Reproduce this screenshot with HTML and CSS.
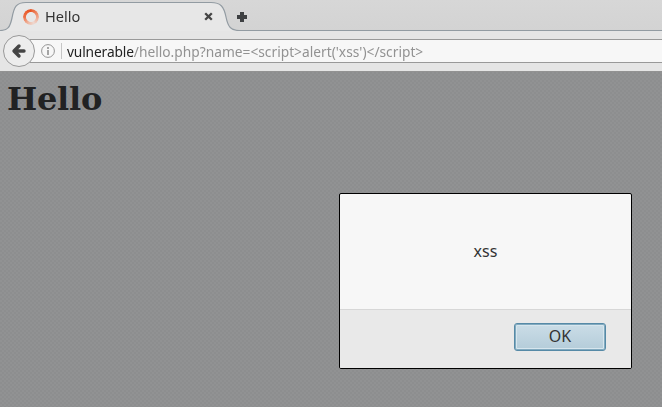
FILE: index.html
```html
<!DOCTYPE html>
<html lang="en">
<head>
<meta charset="utf-8">
<title>Hello</title>
<link rel="stylesheet" href="styles.css">
</head>
<body>
<div class="browser">
  <header class="tabs">
    <svg class="tab-shape" width="662" height="31" viewBox="0 0 662 31">
      <path d="M0 30.5C8 30.5 10 27 12 18C14 7 16 2.5 26 2.5H211C221 2.5 224 7 226 17C228 27 231 30.5 239 30.5V31H0Z" fill="#e7e7e7"/>
      <path d="M0 30.5C8 30.5 10 27 12 18C14 7 16 2.5 26 2.5H211C221 2.5 224 7 226 17C228 27 231 30.5 239 30.5H662" fill="none" stroke="#929ba2" stroke-width="1.2"/>
    </svg>
    <div class="tab">
      <span class="spinner"></span>
      <span class="tab-title"><span class="fit">Hello</span></span>
      <svg class="close" width="9" height="9" viewBox="0 0 9 9"><path d="M1.2 1.2L7.8 7.8M7.8 1.2L1.2 7.8" stroke="#454545" stroke-width="2.3"/></svg>
    </div>
    <svg class="plus" width="12" height="12" viewBox="0 0 12 12"><path d="M4 1H8V4H11V8H8V11H4V8H1V4H4Z" fill="#3e4042"/></svg>
  </header>
  <nav class="toolbar">
    <button class="back" aria-label="Back"><svg width="16" height="16" viewBox="0 0 16 16"><path d="M8 3L3 8L8 13M3.5 8H13" fill="none" stroke="#454545" stroke-width="3.4" stroke-linejoin="round" stroke-linecap="round"/></svg></button>
    <div class="address">
      <svg class="info" width="14" height="14" viewBox="0 0 14 14"><circle cx="7" cy="7" r="6.4" fill="none" stroke="#959595"/><path d="M7 3V5M7 6V11" stroke="#909090" stroke-width="1.6"/></svg>
      <span class="divider"></span>
      <span class="url"><span class="fit"><b>vulnerable</b>/hello.php?name=&lt;script&gt;alert('xss')&lt;/script&gt;</span></span>
    </div>
  </nav>
  <main class="page">
    <h1>Hello</h1>
    <section class="dialog" role="alertdialog">
      <div class="message">xss</div>
      <footer class="actions"><button class="ok">OK</button></footer>
    </section>
  </main>
</div>
</body>
</html>
```
FILE: styles.css
```css
* { box-sizing: border-box; }
body { margin: 0; font-family: "Noto Sans", sans-serif; }
button { padding: 0; font: inherit; }
svg { display: block; flex: none; }
.browser { display: flex; flex-direction: column; width: 662px; height: 407px; overflow: hidden; }
.tabs { position: relative; display: flex; align-items: center; height: 31px; padding-top: 2px; background: linear-gradient(#d7d7d7, #d3d3d3); }
.tab-shape { position: absolute; left: 0; top: 0; }
.tab { position: relative; display: flex; align-items: center; width: 236px; padding-left: 23px; }
.spinner { width: 16px; height: 16px; border-radius: 50%; background: conic-gradient(#e85c2c, #efa58b 90deg, #eed8d0 155deg, #efb8a2 205deg, #ed7046 270deg, #e8511f); -webkit-mask: radial-gradient(circle, transparent 4.6px, #000 5.3px); mask: radial-gradient(circle, transparent 4.6px, #000 5.3px); }
.tab-title { width: 159px; margin-left: 6px; padding-bottom: 2px; font-size: 15px; line-height: 20px; color: #333; }
.fit { display: inline-block; transform-origin: left; white-space: nowrap; }
.tab-title .fit { transform: scaleX(.97); }
.plus { position: relative; }
.toolbar { display: flex; align-items: center; height: 40px; padding-left: 3px; background: #e5e5e5; }
.back { z-index: 1; display: flex; flex: none; align-items: center; justify-content: center; width: 32px; height: 32px; border: 1px solid #999; border-radius: 50%; background: #ededed; }
.address { display: flex; flex: 1; align-items: center; height: 24px; margin-left: -5px; padding-left: 11px; border: solid #999; border-width: 1px 0; background: #f7f7f7; }
.divider { width: 1px; height: 16px; margin: 0 5px 0 6px; background: #c6c6c6; }
.url { font-size: 15px; line-height: 20px; color: #929292; }
.url .fit { transform: scaleX(.917); }
.url b { font-weight: 400; letter-spacing: -.15px; color: #222; }
.page { flex: 1; border-top: 1px solid #929292; background: repeating-conic-gradient(#8d8e8f 0 25%, #919293 0 50%) 0 0 / 4px 4px; }
h1 { margin: 7px 0 0 7px; font: bold 32px/40px "DejaVu Serif", serif; letter-spacing: -.25px; color: #212223; }
.dialog { width: 293px; height: 176px; margin: 74px 0 0 339px; border: 1px solid #000; border-radius: 2px; background: #f7f7f7; overflow: hidden; }
.message { height: 115px; font-size: 16px; line-height: 115px; text-align: center; color: #333; }
.actions { display: flex; justify-content: flex-end; height: 59px; padding: 13px 25px 0; border-top: 1px solid #d7d7d7; background: #e9e9e9; }
.ok { width: 92px; height: 28px; padding-bottom: 2px; border: 1px solid #568aa7; border-radius: 3px; background: linear-gradient(#cbdde7, #b4ccd9); box-shadow: inset 0 0 0 1px #82aabf, inset 0 0 0 2px #d7e6ee; font-size: 16px; line-height: 24px; color: #333; }
```
